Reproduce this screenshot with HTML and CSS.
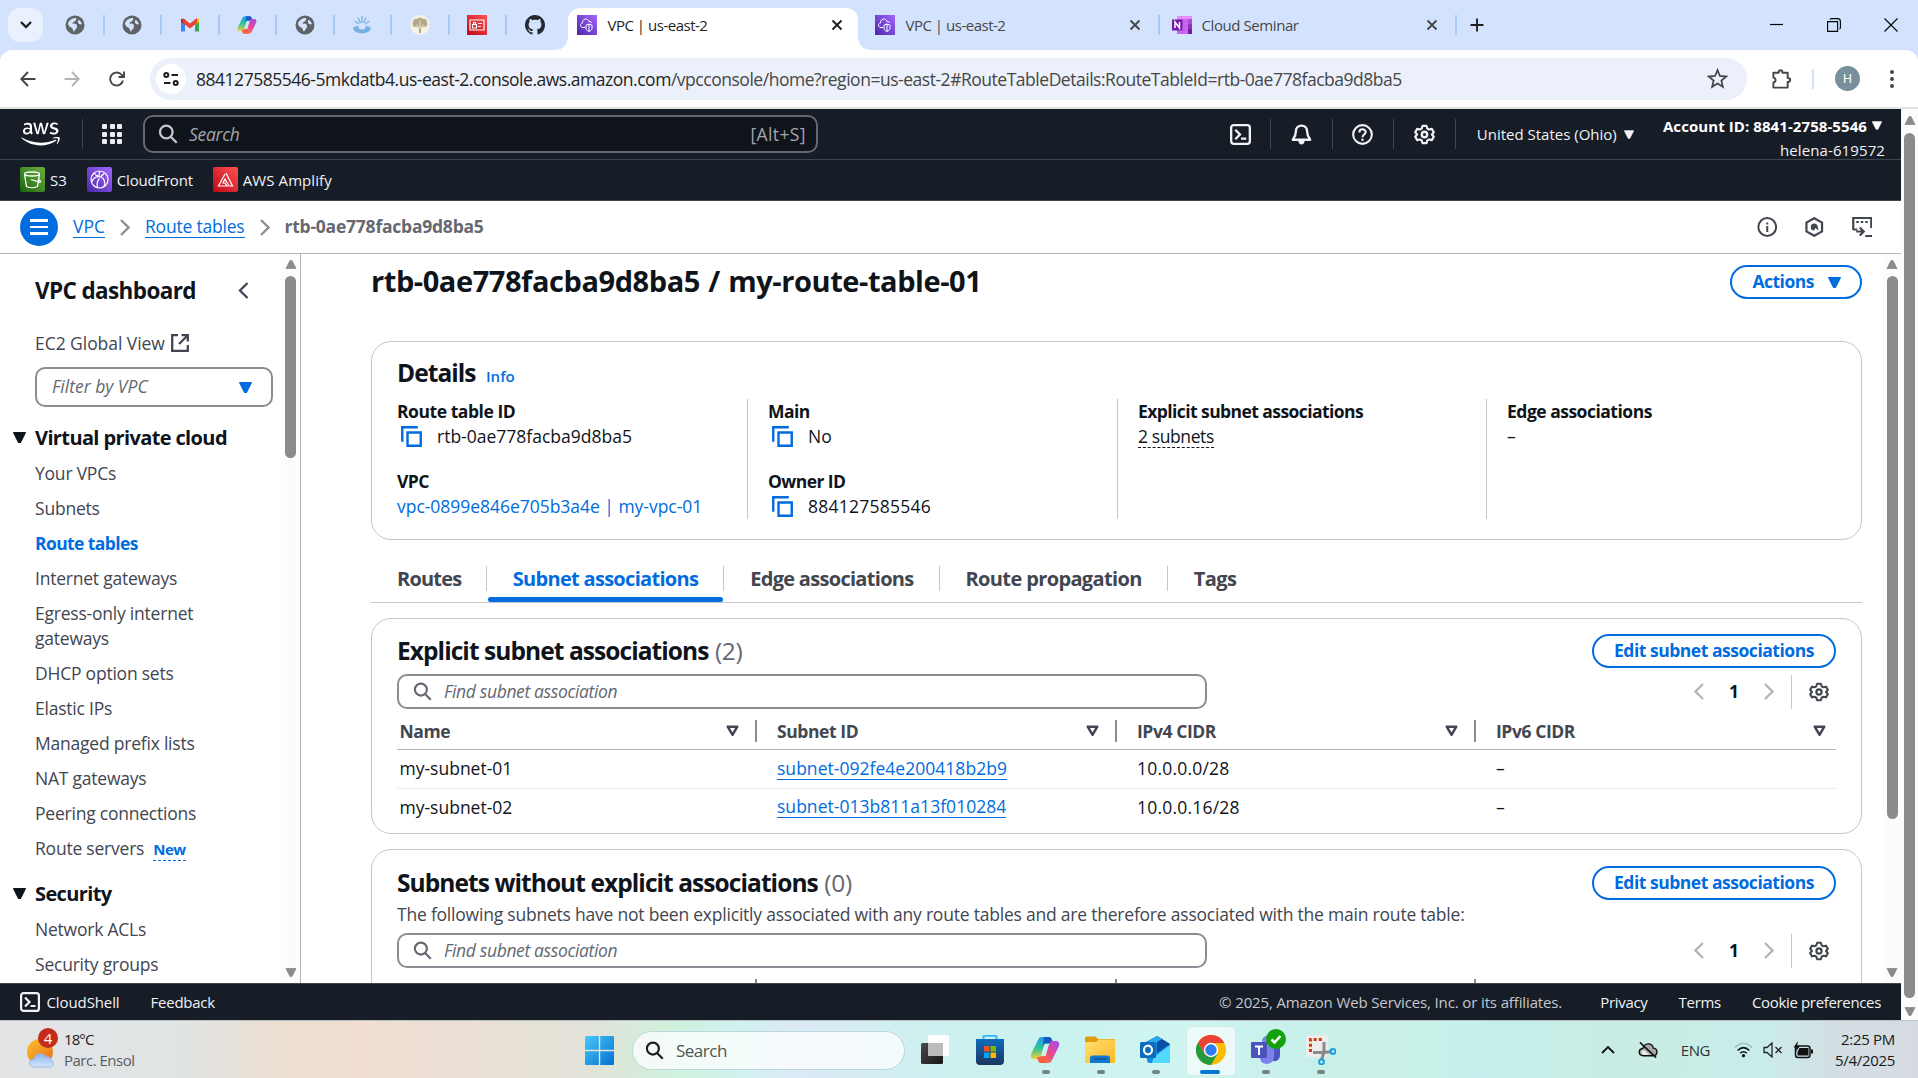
FILE: index.html
```html
<!DOCTYPE html>
<html lang="en">
<head>
<meta charset="utf-8">
<title>VPC | us-east-2</title>
<link rel="stylesheet" href="styles.css">
</head>
<body>
<svg class="defs" aria-hidden="true">
  <defs>
    <linearGradient id="purple" x1="0" y1="1" x2="1" y2="0"><stop offset="0" stop-color="#4d27a8"/><stop offset="1" stop-color="#a166ff"/></linearGradient>
    <linearGradient id="red" x1="0" y1="1" x2="1" y2="0"><stop offset="0" stop-color="#bd0816"/><stop offset="1" stop-color="#ff5252"/></linearGradient>
    <linearGradient id="green" x1="0" y1="1" x2="1" y2="0"><stop offset="0" stop-color="#1b660f"/><stop offset="1" stop-color="#6cae3e"/></linearGradient>
    <linearGradient id="cpA" x1="0" y1="0" x2="0" y2="1"><stop offset="0" stop-color="#1b9af0"/><stop offset=".5" stop-color="#2fc39a"/><stop offset="1" stop-color="#f5d13a"/></linearGradient>
    <linearGradient id="cpB" x1="1" y1="0" x2="0" y2="1"><stop offset="0" stop-color="#a24df5"/><stop offset=".5" stop-color="#e8488f"/><stop offset="1" stop-color="#ff8a3c"/></linearGradient>
    <linearGradient id="win" x1="0" y1="0" x2="1" y2="1"><stop offset="0" stop-color="#4cc8fa"/><stop offset="1" stop-color="#0070d2"/></linearGradient>
    <linearGradient id="sun" x1="0" y1="0" x2="1" y2="1"><stop offset="0" stop-color="#f5c52c"/><stop offset="1" stop-color="#ee6a1c"/></linearGradient>
    <linearGradient id="cloudg" x1="0" y1="0" x2="0" y2="1"><stop offset="0" stop-color="#8fb4f4"/><stop offset="1" stop-color="#d3e6fd"/></linearGradient>
    <linearGradient id="folder" x1="0" y1="0" x2="1" y2="1"><stop offset="0" stop-color="#ffdf77"/><stop offset="1" stop-color="#fbb91f"/></linearGradient>
    <linearGradient id="store" x1="0" y1="0" x2="0" y2="1"><stop offset="0" stop-color="#0f6cbd"/><stop offset="1" stop-color="#1d3560"/></linearGradient>
    <linearGradient id="dark" x1="0" y1="0" x2="1" y2="1"><stop offset="0" stop-color="#4a4a4a"/><stop offset="1" stop-color="#161616"/></linearGradient>
  </defs>
  <symbol id="globe" viewBox="0 0 20 20"><circle cx="10" cy="10" r="9.500" fill="#5f6368"/><path d="M3 8c2-4 5-5 8-5 1 2-1 3-2 4-1 0-2 1-1 2 2-1 4 0 4 2 0 3-2 3-3 6-1-1-1-3-2-4-2-1-4-2-4-5zM13 5c2 0 3 2 4 4-1 1-3 0-4-1z" fill="#d3e3fd"/></symbol>
  <symbol id="vpcfav" viewBox="0 0 20 20"><path fill="url(#purple)" d="M0 0h20v20H0z"/><path d="M8 12.500H6c-3 0-3.500-4-.5-4.500C5 3.500 11 2.500 12 6.500c1.500-.5 2.500.5 2.500 1.500" fill="none" stroke="#fff" stroke-width="1"/><path d="M12 9l3 1.200v3c0 1.500-1 2.500-3 3.300-2-.8-3-1.800-3-3.300v-3zM12 9v7" fill="none" stroke="#fff" stroke-width="1"/></symbol>
  <symbol id="copilot" viewBox="0 0 30 30"><path d="M8 5Q9 2 12 2h7q2.500 0 1.500 3l-1 4h-5l-4 13q-.8 2-3 2H4Q0 24 1 19z" fill="url(#cpA)"/><path d="M14 2h5q3 0 4 6h-7q-2 0-3 3z" fill="#1757c8"/><path d="M22 25q-1 3-4 3h-7q-2.500 0-1.500-3l1-4h5l4-13q.8-2 3-2H26q4 0 3 5z" fill="url(#cpB)"/><path d="M16 28h-5q-3 0-4-6h7q2 0 3-3z" fill="#f9603f"/></symbol>
  <symbol id="gear" viewBox="0 0 20 20"><g fill="none" stroke="currentColor" stroke-width="2.200" stroke-linejoin="round"><path d="M8 1.200h4l.8 2.700 1.900 1.100 2.700-.7 2 3.400L17.500 10l1.900 2.300-2 3.400-2.700-.7-1.900 1.100-.8 2.700H8l-.8-2.700L5.300 15l-2.700.7-2-3.400L2.500 10 .6 7.700l2-3.400 2.700.7 1.900-1.100z" transform="translate(.6 .6) scale(.94)"/><circle cx="10" cy="10" r="2.600"/></g></symbol>
  <symbol id="mag" viewBox="0 0 20 20"><g fill="none" stroke="currentColor" stroke-width="2.300"><circle cx="8.300" cy="8" r="6.300"/><path d="M12.700 12.700l6 6"/></g></symbol>
  <symbol id="copy" viewBox="0 0 20 20"><path d="M1.200 15V1.200H16M6.200 6.200h12.600v12.600H6.200z" fill="none" stroke="#006ce0" stroke-width="2.300"/></symbol>
  <symbol id="x" viewBox="0 0 12 12"><path d="M1.500 1.500l9 9m0-9l-9 9" fill="none" stroke="currentColor" stroke-width="1.900"/></symbol>
  <symbol id="shell" viewBox="0 0 20 20"><g fill="none" stroke="currentColor" stroke-width="2.200"><rect x="1.100" y="1.100" width="17.800" height="17.800" rx="2.500"/><path d="M5 5.500L9.500 10 5 14.500M10.500 14h5"/></g></symbol>
  <symbol id="left" viewBox="0 0 10 17"><path d="M9 1L1.500 8.500 9 16" fill="none" stroke="currentColor" stroke-width="2.300"/></symbol>
  <symbol id="right" viewBox="0 0 10 17"><path d="M1 1l7.500 7.500L1 16" fill="none" stroke="currentColor" stroke-width="2.300"/></symbol>
  <symbol id="tri" viewBox="0 0 12 10"><path d="M.5.500h11L7 9.500H5z" fill="currentColor" stroke="currentColor" stroke-linejoin="round"/></symbol>
  <symbol id="sort" viewBox="0 0 12 11"><path d="M1.600 1.500h8.800L6 9z" fill="none" stroke="#424650" stroke-width="2.300" stroke-linejoin="round"/></symbol>
</svg>

<div class="tabstrip">
  <button class="tabsearch"><svg width="12" height="8" viewBox="0 0 12 8"><path d="M1 1l5 5 5-5" fill="none" stroke="#1f1f1f" stroke-width="2.300"/></svg></button>
  <div class="pinned">
    <span class="pin"><svg><use href="#globe"/></svg></span>
    <span class="pin"><svg><use href="#globe"/></svg></span>
    <span class="pin"><svg viewBox="0 0 20 20"><path d="M1 4v12.500h4V4z" fill="#4285f4"/><path d="M15 4v12.500h4V4z" fill="#34a853"/><path d="M1 3.500L5 5v5L1 7z" fill="#c5221f"/><path d="M15 5l4-1.500V7l-4 3z" fill="#fbbc04"/><path d="M3 3l7 5.500L17 3v5l-7 5.500L3 8z" fill="#ea4335"/></svg></span>
    <span class="pin"><svg><use href="#copilot"/></svg></span>
    <span class="pin"><svg><use href="#globe"/></svg></span>
    <span class="pin"><svg viewBox="0 0 20 20"><path d="M1 13c1 7 17 7 18 0-2-2-5-2-6-2 2 2-1 3.500-3 3.500S5 13 7 11c-1 0-4 0-6 2z" fill="#74b1e2"/><path d="M10 1v7M6 2.500L8.500 8M14 2.500L11.500 8M2.500 6L7 9M17.500 6L13 9" stroke="#74b1e2" stroke-width="1.200"/></svg></span>
    <span class="pin"><svg viewBox="0 0 20 20"><circle cx="10" cy="10" r="10" fill="#f6f1e4"/><path d="M9 18v-5l-3-1.500c-3 1-4-2-3-4C3 5 5 3 7 4c2-2 4-2 6 0 2-1 4 1 4 3.500 1 2 0 5-3 4L11 13v5z" fill="#b3a88c"/><path d="M6 9.500L10 13l4-3.500M10 6v7" stroke="#f6f1e4" stroke-width=".8" fill="none"/></svg></span>
    <span class="pin"><svg viewBox="0 0 20 20"><path fill="url(#red)" d="M0 0h20v20H0z"/><g fill="none" stroke="#fff" stroke-width="1.200"><path d="M3 5h14v10H3zM11 8.500h4M11 11.500h3M5.500 9.500h4V13h-4zM6.500 9V7.500h2V9"/></g></svg></span>
    <span class="pin"><svg viewBox="0 0 16 16"><path fill="#24292f" d="M8 0C3.580 0 0 3.580 0 8c0 3.540 2.290 6.530 5.470 7.590.4.070.55-.17.55-.38 0-.19-.01-.82-.01-1.490-2.010.37-2.530-.49-2.690-.94-.09-.23-.48-.94-.82-1.130-.28-.15-.68-.52-.01-.53.63-.01 1.080.58 1.230.82.72 1.210 1.870.87 2.330.66.070-.52.28-.87.51-1.070-1.780-.2-3.640-.89-3.640-3.950 0-.87.31-1.590.82-2.150-.08-.2-.36-1.020.08-2.120 0 0 .67-.21 2.200.82.64-.18 1.320-.27 2-.27s1.360.09 2 .27c1.530-1.040 2.200-.82 2.200-.82.44 1.100.16 1.920.08 2.120.51.56.82 1.270.82 2.150 0 3.070-1.870 3.750-3.650 3.950.29.25.54.73.54 1.480 0 1.070-.01 1.930-.01 2.200 0 .21.15.46.55.38A8 8 0 0 0 16 8c0-4.420-3.580-8-8-8z"/></svg></span>
  </div>
  <div class="tab active"><svg class="fav"><use href="#vpcfav"/></svg><span class="tt">VPC | us-east-2</span><svg class="cls"><use href="#x"/></svg></div>
  <div class="tab second"><svg class="fav"><use href="#vpcfav"/></svg><span class="tt">VPC | us-east-2</span><svg class="cls"><use href="#x"/></svg></div>
  <div class="tab third"><svg class="fav" viewBox="0 0 20 20"><path fill="#ca64ea" d="M5 1h15v18H5z"/><path fill="#e48ff5" d="M5 1h15v3H5z"/><path fill="#ae4bd5" d="M16 4h4v5h-4z"/><path fill="#9332bf" d="M16 9h4v5h-4z"/><path fill="#7719aa" d="M16 14h4v5h-4zM0 4.500h10.500v11H0z"/><path d="M3 13V7l4.500 6V7" stroke="#fff" stroke-width="1.500" fill="none"/></svg><span class="tt">Cloud Seminar</span><svg class="cls"><use href="#x"/></svg></div>
  <svg class="plus" viewBox="0 0 14 14"><path d="M7 .5v13M.5 7h13" stroke="#1f1f1f" stroke-width="1.900"/></svg>
  <div class="winctl">
    <svg width="13" height="13" viewBox="0 0 13 13"><path d="M0 5.500h13" stroke="#000" stroke-width="1.200"/></svg>
    <svg width="14" height="14" viewBox="0 0 14 14"><path d="M.6 3.600h10v9.800h-10zM3 1.500q.5-.9 1.500-.9h6q2.900 0 2.900 2.900v6q0 1-.9 1.500" fill="none" stroke="#000" stroke-width="1.100"/></svg>
    <svg width="14" height="14" viewBox="0 0 14 14"><path d="M.5.500l13 13m0-13l-13 13" stroke="#000" stroke-width="1.100"/></svg>
  </div>
</div>

<div class="toolbar">
  <svg class="nav back" viewBox="0 0 16 16"><path d="M15.500 8H1.500M8 1L1.300 8 8 15" fill="none" stroke="#474747" stroke-width="2"/></svg>
  <svg class="nav fwd" viewBox="0 0 16 16"><path d="M.5 8h14M8 1l6.700 7L8 15" fill="none" stroke="#b5b5b5" stroke-width="2"/></svg>
  <svg class="nav reload" viewBox="0 0 16 16"><path d="M14 9.500A6.500 6.500 0 1 1 12.800 4L15 6M15 .5V6H9.500" fill="none" stroke="#474747" stroke-width="1.900"/></svg>
  <div class="omnibox">
    <span class="site"><svg width="16" height="14" viewBox="0 0 16 14"><g fill="none" stroke="#1f1f1f" stroke-width="2"><circle cx="3.300" cy="3" r="2"/><path d="M8.500 3H15M1 11h6.500"/><circle cx="12.700" cy="11" r="2"/></g></svg></span>
    <span class="url">884127585546-5mkdatb4.us-east-2.console.aws.amazon.com<i>/vpcconsole/home?region=us-east-2#RouteTableDetails:RouteTableId=rtb-0ae778facba9d8ba5</i></span>
    <svg class="star" viewBox="0 0 20 20"><path d="M10 2l2.300 5.600 6 .5-4.600 3.900 1.400 5.900-5.100-3.200-5.100 3.200L6.300 12 1.700 8.100l6-.5z" fill="none" stroke="#474747" stroke-width="1.700"/></svg>
  </div>
  <svg class="puzzle" viewBox="0 0 22 22"><path d="M2.500 4.500H8c0-3.500 4-3.500 4 0h5.500V10c3.500 0 3.500 4 0 4v6h-15v-5.500c3-.5 3-4.500 0-5z" fill="none" stroke="#474747" stroke-width="2" stroke-linejoin="round"/></svg>
  <span class="tsep"></span>
  <span class="avatar">H</span>
  <span class="kebab"><b></b><b></b><b></b></span>
</div>

<div class="page">
  <div class="console">
    <header class="aws-top">
      <svg class="logo" viewBox="0 0 304 182"><path fill="#fff" d="M86 66c0 4 0 7 1 9 1 2 2 5 4 8 0 1 1 2 1 2 0 1-1 2-2 3l-6 4c-1 1-2 1-3 1-1 0-2 0-3-1-1-2-3-3-4-5-1-2-2-4-3-6-8 9-17 14-29 14-8 0-15-2-20-7-5-5-7-11-7-19 0-8 3-15 9-20 6-5 14-8 24-8 3 0 7 0 10 1 4 1 7 1 11 2v-7c0-7-1-12-4-15-3-3-8-4-15-4-3 0-7 0-10 1-4 1-7 2-10 3l-3 1h-2c-1 0-2-1-2-3v-5c0-1 0-2 1-3 0-1 1-1 3-2 3-2 7-3 11-4 5-1 10-2 15-2 11 0 20 3 25 8 5 5 8 13 8 24v30zM45 82c3 0 6-1 10-2 3-1 6-3 9-6 2-2 3-4 3-7 1-2 1-6 1-9v-4c-3-1-6-1-9-2-3 0-6 0-9 0-6 0-11 1-14 4-3 3-5 6-5 11 0 5 1 8 4 11 2 2 6 4 10 4zM126 92c-2 0-3 0-4-1-1-1-2-2-2-4L96 10c-1-2-1-3-1-4 0-2 1-2 2-2h10c2 0 3 0 4 1 1 1 1 2 2 4l17 66 15-66c1-2 1-3 2-4 1-1 2-1 4-1h8c2 0 3 0 4 1 1 1 2 2 2 4l16 67 17-67c1-2 1-3 2-4 1-1 2-1 4-1h9c2 0 2 1 2 2v2l-25 79c-1 2-1 3-2 4-1 1-2 1-4 1h-9c-2 0-3 0-4-1-1-1-2-2-2-4L154 23l-15 64c0 2-1 3-2 4-1 1-2 1-4 1zM256 95c-5 0-11-1-16-2-5-1-9-3-12-4-2-1-3-2-3-3v-8c0-2 1-3 2-3h2l3 1c3 2 7 3 11 4 4 1 8 1 12 1 6 0 11-1 14-3 3-2 5-5 5-9 0-3-1-5-3-7-2-2-5-3-10-5l-14-5c-7-2-13-6-16-10-3-4-5-9-5-14 0-4 1-8 3-11 2-3 4-6 7-8 3-2 6-4 10-5 4-1 8-2 13-2 2 0 5 0 7 0l7 1 6 2 4 2 3 2c1 1 1 2 1 3v5c0 2-1 3-2 3-1 0-2 0-4-1-6-3-12-4-19-4-6 0-10 1-13 3-3 2-5 5-5 8 0 3 1 5 3 7 2 2 6 4 11 6l14 4c7 2 12 5 15 9 3 4 5 9 5 14 0 4-1 8-3 11-2 4-4 7-7 9-3 3-7 4-11 6-5 1-9 2-14 2zM274 143c-33 24-81 37-122 37-58 0-110-21-149-57-3-3 0-7 3-4 43 25 95 40 149 40 37 0 77-8 114-23 5-3 10 3 5 7zM287 128c-4-5-28-3-38-1-3 0-4-2-1-4 19-13 50-9 53-5 4 4-1 36-18 50-3 2-5 1-4-2 4-9 12-31 8-38z"/></svg>
      <span class="vsep"></span>
      <span class="apps"><b></b><b></b><b></b><b></b><b></b><b></b><b></b><b></b><b></b></span>
      <div class="gsearch"><svg><use href="#mag"/></svg><em>Search</em><span>[Alt+S]</span></div>
      <div class="tools">
        <span><svg><use href="#shell"/></svg></span>
        <span><svg viewBox="0 0 20 20"><path d="M10 1.500c-3.500 0-5.300 2.500-5.300 5.500 0 4-1 5.500-3 8h16.600c-2-2.500-3-4-3-8 0-3-1.800-5.500-5.300-5.500z" fill="none" stroke="currentColor" stroke-width="2.200" stroke-linejoin="round"/><path d="M7 15.500c0 5.500 6 5.500 6 0z" fill="currentColor"/></svg></span>
        <span><svg viewBox="0 0 20 20"><g fill="none" stroke="currentColor" stroke-width="2"><circle cx="10" cy="10" r="8.900"/><path d="M7 8c0-4 6-3.800 6-.3C13 10 10 10 10 12.500"/></g><circle cx="10" cy="15" r="1.200" fill="currentColor"/></svg></span>
        <span><svg><use href="#gear"/></svg></span>
      </div>
      <div class="region">United States (Ohio) <svg><use href="#tri"/></svg></div>
      <div class="account"><div><b>Account ID: 8841-2758-5546</b><svg><use href="#tri"/></svg></div><div class="user">helena-619572</div></div>
    </header>
    <div class="favs">
      <a><svg viewBox="0 0 25 25"><rect width="25" height="25" rx="2" fill="url(#green)"/><g fill="none" stroke="#fff" stroke-width="1.300"><ellipse cx="12" cy="7" rx="7.500" ry="2"/><path d="M4.500 7l2 12.500c3 1.500 8 1.500 11 0l2-12.500M11 12.500l8.500 2.500c2 .3 1-1.500-1-2.500"/></g></svg>S3</a>
      <a class="cf"><svg viewBox="0 0 25 25"><rect width="25" height="25" rx="2" fill="url(#purple)"/><g fill="none" stroke="#fff" stroke-width="1.200"><circle cx="12.500" cy="12.500" r="8.500"/><path d="M7 6c2 3 3 3 5.500 3.500M5 15c1-5 6-6 9-5s5 6 3 9M13 4.500c-1 1-1 4-1 5M12.500 11.500c-2 2-3 5-2 9M17 6.500l-3 3"/></g></svg>CloudFront</a>
      <a class="am"><svg viewBox="0 0 25 25"><rect width="25" height="25" rx="2" fill="url(#red)"/><g fill="none" stroke="#fff" stroke-width="1.200"><path d="M12 7L5.500 19H14l-2-3h-2l2-4 4 7h3.500L13 6"/></g></svg>AWS Amplify</a>
    </div>
    <div class="crumbs">
      <span class="burger"><b></b><b></b><b></b></span>
      <a>VPC</a><svg class="ch"><use href="#right"/></svg><a class="rt">Route tables</a><svg class="ch"><use href="#right"/></svg><strong>rtb-0ae778facba9d8ba5</strong>
      <div class="cicons">
        <svg viewBox="0 0 20 20"><circle cx="10" cy="10" r="8.900" fill="none" stroke="#424650" stroke-width="2"/><path d="M9 5.500h2v2H9zM9 9h2v6H9z" fill="#424650"/></svg>
        <svg viewBox="0 0 20 20"><path d="M10 1.200l7.800 4.400v8.800L10 18.800l-7.800-4.400V5.600z" fill="none" stroke="#424650" stroke-width="2.200"/><path d="M10 6.500a3.500 3.500 0 1 0 0 7l1-2.500 3.500 2.500-1-3A3.500 3.500 0 0 0 10 6.500z" fill="#424650"/></svg>
        <svg viewBox="0 0 20 20"><path d="M1 13V1h18v10M1 12.500h4M13 19h7M4 14.500h7M7.500 10.500l4 4-4 4" fill="none" stroke="#424650" stroke-width="2.200"/><path d="M4 4h2.500v2H4zM8.500 4H11v2H8.500zM13 4h2.500v2H13z" fill="#424650"/></svg>
      </div>
    </div>
    <div class="body">
      <nav class="side">
        <div class="nav-list">
          <div class="dash"><h2>VPC dashboard</h2><svg><use href="#left"/></svg></div>
          <div class="ec2">EC2 Global View <svg viewBox="0 0 18 18"><path d="M7 1.200H1.200v15.600h15.600V11M10.500 1.200h6.300v6.300M16.800 1.200L8 10" fill="none" stroke="#424650" stroke-width="2.300"/></svg></div>
          <div class="filter"><em>Filter by VPC</em><svg><use href="#tri"/></svg></div>
          <h3 class="vpcg"><svg><use href="#tri"/></svg>Virtual private cloud</h3>
          <ul>
            <li>Your VPCs</li><li>Subnets</li><li class="on">Route tables</li><li>Internet gateways</li><li>Egress-only internet<br>gateways</li><li>DHCP option sets</li><li>Elastic IPs</li><li>Managed prefix lists</li><li>NAT gateways</li><li>Peering connections</li><li>Route servers<span class="new">New</span></li>
          </ul>
          <h3 class="secg"><svg><use href="#tri"/></svg>Security</h3>
          <ul><li>Network ACLs</li><li>Security groups</li></ul>
        </div>
        <div class="sb side-sb"><svg class="up"><use href="#tri"/></svg><span class="thumb"></span><svg class="down"><use href="#tri"/></svg></div>
      </nav>
      <main>
        <div class="titlebar"><h1>rtb-0ae778facba9d8ba5 / my-route-table-01</h1><button class="pill actions">Actions <svg><use href="#tri"/></svg></button></div>
        <section class="card details">
          <div class="dh"><h2>Details</h2><a>Info</a></div>
          <div class="cols">
            <div><dl><dt class="w1">Route table ID</dt><dd class="cp"><svg><use href="#copy"/></svg>rtb-0ae778facba9d8ba5</dd><dt>VPC</dt><dd class="lnk">vpc-0899e846e705b3a4e | my-vpc-01</dd></dl></div>
            <div><dl><dt>Main</dt><dd class="cp"><svg><use href="#copy"/></svg>No</dd><dt>Owner ID</dt><dd class="cp num"><svg><use href="#copy"/></svg>884127585546</dd></dl></div>
            <div><dl><dt>Explicit subnet associations</dt><dd><span class="dash-u">2 subnets</span></dd></dl></div>
            <div><dl><dt class="w2">Edge associations</dt><dd>–</dd></dl></div>
          </div>
        </section>
        <div class="tabs"><span>Routes</span><span class="on">Subnet associations</span><span>Edge associations</span><span>Route propagation</span><span>Tags</span></div>
        <section class="card explicit">
          <div class="ch2"><h2>Explicit subnet associations <i>(2)</i></h2><button class="pill">Edit subnet associations</button></div>
          <div class="finder">
            <div class="find"><svg><use href="#mag"/></svg><em>Find subnet association</em></div>
            <div class="pager"><svg class="ar"><use href="#left"/></svg><b>1</b><svg class="ar"><use href="#right"/></svg><span class="psep"></span><svg class="gr"><use href="#gear"/></svg></div>
          </div>
          <div class="table">
            <div class="tr th"><span>Name<svg><use href="#sort"/></svg></span><span>Subnet ID<svg><use href="#sort"/></svg></span><span>IPv4 CIDR<svg><use href="#sort"/></svg></span><span>IPv6 CIDR<svg><use href="#sort"/></svg></span></div>
            <div class="tr"><span>my-subnet-01</span><span><a>subnet-092fe4e200418b2b9</a></span><span class="ip">10.0.0.0/28</span><span>–</span></div>
            <div class="tr"><span>my-subnet-02</span><span><a>subnet-013b811a13f010284</a></span><span class="ip">10.0.0.16/28</span><span>–</span></div>
          </div>
        </section>
        <section class="card without">
          <div class="ch2"><h2>Subnets without explicit associations <i>(0)</i></h2><button class="pill">Edit subnet associations</button></div>
          <p>The following subnets have not been explicitly associated with any route tables and are therefore associated with the main route table:</p>
          <div class="finder">
            <div class="find"><svg><use href="#mag"/></svg><em>Find subnet association</em></div>
            <div class="pager"><svg class="ar"><use href="#left"/></svg><b>1</b><svg class="ar"><use href="#right"/></svg><span class="psep"></span><svg class="gr"><use href="#gear"/></svg></div>
          </div>
          <div class="table cut"><div class="tr th"><span></span><span></span><span></span><span></span></div></div>
        </section>
      </main>
      <div class="sb main-sb"><svg class="up"><use href="#tri"/></svg><span class="thumb"></span><svg class="down"><use href="#tri"/></svg></div>
    </div>
    <footer><svg><use href="#shell"/></svg><span class="f1">CloudShell</span><span class="f2">Feedback</span><span class="copy">© 2025, Amazon Web Services, Inc. or its affiliates.</span><span class="f3">Privacy</span><span class="f4">Terms</span><span class="f5">Cookie preferences</span></footer>
  </div>
  <div class="sb page-sb"><svg class="up"><use href="#tri"/></svg><span class="thumb"></span><svg class="down"><use href="#tri"/></svg></div>
</div>

<div class="taskbar">
  <div class="weather">
    <svg width="34" height="40" viewBox="0 0 34 40"><circle cx="15" cy="22" r="13" fill="url(#sun)"/><path d="M8 37c-6 0-6-8 0-8 1-6 10-7 12-2 5-1 6 3 5 4 4 1 3 6-1 6z" fill="url(#cloudg)" stroke="#8fb0ea" stroke-width=".8" transform="translate(1)"/></svg>
    <span class="badge">4</span>
    <div><div class="temp">18°C</div><div class="city">Parc. Ensol</div></div>
  </div>
  <svg class="start" viewBox="0 0 29 29"><path fill="url(#win)" d="M0 1q0-1 1-1h12.800v13.800H0zM15.200 0H28q1 0 1 1v12.800H15.200zM0 15.200h13.800V29H1q-1 0-1-1zM15.200 15.200H29V28q0 1-1 1H15.200z"/></svg>
  <div class="wsearch"><svg><use href="#mag"/></svg>Search</div>
  <div class="apps-row">
    <span><svg viewBox="0 0 30 30"><rect x="1" y="8" width="22" height="21" rx="1.500" fill="url(#dark)"/><rect x="8" y="0" width="21" height="21" rx="1.500" fill="#fff" opacity=".9"/><path d="M8 8h15v13H8z" fill="#bcbcbc"/></svg></span>
    <span><svg viewBox="0 0 30 30"><path d="M8.500 6V2q0-1.200 1.200-1.200h10.600q1.200 0 1.200 1.200v4" fill="none" stroke="#2fb9f5" stroke-width="2"/><path d="M1 4h28v22q0 4-4 4H5q-4 0-4-4z" fill="url(#store)"/><path fill="#f25022" d="M9 11h5.500v5.500H9z"/><path fill="#7fba00" d="M15.500 11H21v5.500h-5.500z"/><path fill="#00a4ef" d="M9 17.500h5.500V23H9z"/><path fill="#ffb900" d="M15.500 17.500H21V23h-5.500z"/></svg></span>
    <span class="dot"><svg><use href="#copilot"/></svg></span>
    <span class="dot"><svg viewBox="0 0 30 30"><path d="M0 3q0-1.500 1.500-1.500h9L13 4h17v5H0z" fill="#df9c05"/><path d="M0 7h11l3-2.500h15q1 0 1 1V27q0 1-1 1H1q-1 0-1-1z" fill="url(#folder)"/><path d="M5 28v-5q0-2.500 2.500-2.500h15q2.500 0 2.500 2.500v5z" fill="#1277cf"/><path d="M9 24h12" stroke="#0a4f94" stroke-width="1.300"/></svg></span>
    <span class="dot"><svg viewBox="0 0 30 30"><path d="M4 8L17 1l13 8v16q0 3-3 3H10q-3 0-3-3z" fill="#1490df"/><path d="M14 22L30 10v15q0 3-3 3H12z" fill="#50d9ff"/><path d="M17 1l13 8-13 9z" fill="#0a4da2"/><path d="M4 8L17 1l5 3L9 12z" fill="#28a8ea"/><rect y="7" width="16" height="16" rx="1.500" fill="#0f6cbd"/><ellipse cx="8" cy="15" rx="4" ry="4.300" fill="none" stroke="#fff" stroke-width="2.200"/></svg></span>
    <span class="cur"><svg viewBox="0 0 30 30"><circle cx="15" cy="15" r="15" fill="#fbbc05"/><path d="M15 15L8.500 18.500 2 7.500A15 15 0 0 0 15 30l6.500-11z" fill="#249a41"/><path d="M28.300 8H15l-6.500 10.500L2 7.500A15 15 0 0 1 28.300 8z" fill="#ea4335"/><circle cx="15" cy="15" r="7.200" fill="#fff"/><circle cx="15" cy="15" r="5.700" fill="#2f7bf0"/></svg></span>
    <span class="dot teams"><svg viewBox="0 0 30 30"><circle cx="16" cy="6" r="5" fill="#7b83eb"/><path d="M20 12h9v9q-1 6-7 5z" fill="#4f55c0"/><path d="M9 11h14v11q-1 7-8 7-6-1-6-6z" fill="#7b83eb"/><rect y="7" width="16" height="16" rx="1" fill="#4b53bc"/><path d="M4 11.500h8M8 11.500V20" stroke="#fff" stroke-width="2"/></svg><i><svg viewBox="0 0 20 20"><path d="M5.500 10.500l3 3 6-6.500" fill="none" stroke="#fff" stroke-width="2.500"/></svg></i></span>
    <span class="dot"><svg viewBox="0 0 30 30"><rect width="22" height="22" rx="2" fill="#ececec"/><path d="M4.500 17V4.500H17" fill="none" stroke="#d83b01" stroke-width="3" stroke-dasharray="3 2.200"/><path d="M18 7v10.500H7M18 17l-2.500 8M18 17.500l8-1" fill="none" stroke="#8a8a8a" stroke-width="3"/><g fill="none" stroke="#1a9fe0" stroke-width="2"><circle cx="27" cy="16.500" r="2.400"/><circle cx="15.500" cy="27" r="2.400"/></g></svg></span>
  </div>
  <div class="tray">
    <svg class="t1" viewBox="0 0 14 9"><path d="M1 8l6-6 6 6" fill="none" stroke="#111" stroke-width="1.800"/></svg>
    <svg class="t2" viewBox="0 0 22 18"><path d="M5.500 15C0 15 0 8 5 7.500 6.500 1 15 1 16 7c5 0 5 8 .5 8z" fill="#aaa" stroke="#111" stroke-width="1.500"/><path d="M6 14c-3 0-3-5 0-5l6 5z" fill="#eee"/><path d="M2 1l17 16" stroke="#111" stroke-width="1.600"/></svg>
    <span class="lang">ENG</span>
    <svg class="t3" viewBox="0 0 20 16"><g fill="none" stroke="#111" stroke-width="1.500"><path d="M1 5.500q9-9 18 0" stroke="#9fbab8"/><path d="M3.800 8.500q6.200-6 12.400 0M6.500 11.500q3.500-3.300 7 0"/></g><circle cx="10" cy="14" r="1.700" fill="#111"/></svg>
    <svg class="t4" viewBox="0 0 20 16"><path d="M1 5.500h3L9 1v14l-5-4.500H1zM12.500 5l6 6m0-6l-6 6" fill="none" stroke="#222" stroke-width="1.300"/></svg>
    <svg class="t5" viewBox="0 0 20 18"><rect x="2" y="5" width="14.500" height="11.500" rx="2.500" fill="none" stroke="#111" stroke-width="1.500"/><path d="M6 7h9v7.500H4V11z" fill="#111"/><path d="M17.500 8.500h2v4h-2z" fill="#111"/><path d="M4.500 0L0 6.500h3L2 11l4.500-6h-3z" fill="#111"/></svg>
    <div class="clock"><div>2:25 PM</div><div>5/4/2025</div></div>
  </div>
</div>
</body>
</html>
```
FILE: styles.css
```css
* { box-sizing: border-box; }
html, body { margin: 0; height: 100%; overflow: hidden; }
body { display: flex; flex-direction: column; width: 1918px; height: 1078px; font-family: "Open Sans", "Noto Sans", sans-serif; font-size: 17.5px; color: #0f141a; background: #fff; white-space: nowrap; }
svg { display: block; flex: none; }
.defs { position: absolute; width: 0; height: 0; }
h1, h2, h3, p, ul, dl, dd { margin: 0; padding: 0; }
button { font: inherit; border: 0; padding: 0; }

/* browser tabs */
.tabstrip { flex: none; display: flex; align-items: center; height: 50px; background: #d3e3fd; }
.tabsearch { display: flex; align-items: center; justify-content: center; width: 35px; height: 34px; margin-left: 8px; border-radius: 12px; background: #eaf1fe; }
.pinned { display: flex; margin-left: 4px; }
.pin { display: flex; align-items: center; justify-content: center; width: 57.5px; height: 20px; border-right: 2px solid #a8c7fa; }
.pin:last-child { border-right: 0; padding-right: 2px; }
.pin svg { width: 20px; height: 20px; }
.tab { display: flex; align-items: center; font-size: 15px; letter-spacing: -.49px; color: #474747; }
.fav { width: 20px; height: 20px; }
.tt { margin-left: 11px; line-height: 20px; }
.cls { width: 12px; height: 12px; margin-left: auto; }
.active { position: relative; align-self: flex-end; width: 290px; height: 42px; margin-left: 3px; padding: 0 15px 8px 9px; border-radius: 12px 12px 0 0; background: #fff; color: #1f1f1f; }
.active::before, .active::after { content: ""; position: absolute; bottom: 0; width: 12px; height: 12px; }
.active::before { left: -12px; background: radial-gradient(circle at 0 0, transparent 11.5px, #fff 12px); }
.active::after { right: -12px; background: radial-gradient(circle at 100% 0, transparent 11.500px, #fff 12px); }
.second { width: 302px; height: 20px; padding: 0 17px 0 17px; border-right: 2px solid #a8c7fa; }
.third { width: 297px; height: 20px; padding: 0 17px 0 12px; border-right: 2px solid #a8c7fa; letter-spacing: -.42px; }
.third .tt { margin-left: 10px; }
.plus { width: 14px; height: 14px; margin-left: 13px; }
.winctl { display: flex; align-items: center; gap: 43.500px; margin: 0 20px 0 auto; }

/* address bar */
.toolbar { flex: none; display: flex; align-items: center; height: 59px; border-bottom: 2px solid #dfe6e0; background: #fff; border-radius: 12px 12px 0 0; box-shadow: 0 -12px 0 #d3e3fd; clip-path: inset(0); }
.nav { width: 16px; height: 16px; }
.back { margin-left: 20px; }
.fwd { margin-left: 28px; }
.reload { margin-left: 29px; }
.omnibox { display: flex; align-items: center; width: 1597px; height: 42px; margin-left: 25px; border-radius: 21px; background: #ebf0fa; }
.site { display: flex; align-items: center; justify-content: center; width: 30px; height: 30px; margin-left: 6px; border-radius: 50%; background: #fff; }
.url { margin-left: 10px; letter-spacing: -.475px; color: #1f1f1f; }
.url i { font-style: normal; color: #474747; }
.star { width: 21px; height: 21px; margin: 0 19px 0 auto; }
.puzzle { width: 21px; height: 22px; margin-left: 24px; }
.tsep { width: 2px; height: 20px; margin-left: 20px; background: #d3e3fd; }
.avatar { width: 25px; height: 25px; margin-left: 21px; border-radius: 50%; background: #78909c; color: #fff; font: 12.5px/25px Roboto, sans-serif; text-align: center; }
.kebab { display: flex; flex-direction: column; gap: 3px; margin-left: 30px; }
.kebab b { width: 4px; height: 4px; border-radius: 50%; background: #474747; }

/* page frame */
.page { display: flex; height: 911px; }
.console { display: flex; flex-direction: column; width: 1901px; }
.sb { display: flex; flex-direction: column; align-items: center; flex: none; background: #fcfcfc; color: #8b8b8b; }
.sb svg { width: 12px; height: 9px; }
.up { transform: rotate(180deg); }
.thumb { border-radius: 6px; background: #8b8b8b; }
.page-sb { width: 17px; padding-top: 7px; }
.page-sb .thumb { width: 11px; height: 865px; margin: 8px 0 9px; }

/* console header */
.aws-top { flex: none; display: flex; align-items: center; height: 51px; background: #161d26; border-bottom: 1px solid #424650; color: #f2f2f5; font-size: 15px; font-weight: 500; }
.logo { width: 39px; height: 24px; margin-left: 21px; }
.vsep { width: 1px; height: 30px; margin-left: 22px; background: #424650; }
.apps { display: grid; grid-template-columns: repeat(3, 5px); gap: 2.500px; margin-left: 19px; }
.apps b { height: 5px; border-radius: 1px; background: #ebebf0; }
.gsearch { display: flex; align-items: center; width: 675px; height: 38px; margin-left: 21px; padding: 0 10px 0 13px; border: 2px solid #656871; border-radius: 10px; background: #0f141a; font-size: 17.5px; font-weight: 400; color: #a4a4ad; }
.gsearch svg { width: 20px; height: 20px; color: #c6c6cd; }
.gsearch em { margin-left: 11px; padding-bottom: 1px; letter-spacing: -.3px; }
.gsearch span { margin-left: auto; padding-bottom: 1px; letter-spacing: .4px; }
.tools { display: flex; margin-left: 398px; padding-left: 14px; }
.tools span { display: flex; align-items: center; justify-content: center; width: 61.600px; height: 30px; margin-left: 0; border-right: 1px solid #424650; }
.tools span:first-child { width: 41px; padding-right: 20px; }
.tools svg { width: 21px; height: 21px; }
.region { display: flex; align-items: center; margin-left: 21px; }
.region svg, .account svg { width: 10px; height: 9px; margin-left: 7px; }
.account { margin: 7px 16px 0 auto; line-height: 24px; text-align: right; }
.account > div:first-child { display: flex; align-items: center; margin-right: 3px; letter-spacing: .08px; color: #fff; }
.account > div:first-child svg { margin-left: 5px; }
.user { letter-spacing: .1px; }
.favs { flex: none; display: flex; align-items: center; height: 41px; padding: 0 0 1px 20px; background: #161d26; border-bottom: 1px solid #424650; color: #f2f2f5; font-size: 15px; font-weight: 500; }
.favs a { display: flex; align-items: center; gap: 5px; margin-right: 20px; }
.favs svg { width: 25px; height: 25px; }
.cf { letter-spacing: -.21px; }
.am { letter-spacing: .08px; }

.crumbs { flex: none; display: flex; align-items: center; height: 53px; padding-left: 20px; border-bottom: 1px solid #b4b4bb; }
.burger { display: flex; flex-direction: column; align-items: center; justify-content: center; gap: 4px; width: 38px; height: 38px; margin-right: 15px; border-radius: 50%; background: #006ce0; }
.burger b { width: 18px; height: 2.500px; background: #fff; }
.crumbs a { height: 22px; margin-top: -1px; line-height: 20px; border-bottom: 1px solid #006ce0; color: #006ce0; }
.crumbs .rt { letter-spacing: -.2px; }
.crumbs strong { margin-top: -3px; color: #656871; letter-spacing: -.23px; }
.ch { width: 10px; height: 17px; margin: 0 15px; color: #8c8c94; }
.cicons { display: flex; gap: 27px; margin: 0 29px 0 auto; }
.cicons svg { width: 20.500px; height: 20px; }

/* side navigation */
.body { display: flex; height: 729px; }
.side { display: flex; width: 301px; border-right: 1px solid #b4b4bb; overflow: hidden; }
.nav-list { width: 281px; padding-left: 35px; color: #424650; }
.dash { display: flex; align-items: center; height: 28px; margin-top: 22px; color: #0f141a; }
.dash h2 { width: 203px; font-size: 22.500px; letter-spacing: -.62px; }
.dash svg { width: 11px; height: 17px; color: #424650; }
.ec2 { display: flex; align-items: center; gap: 6px; height: 24px; margin-top: 27px; letter-spacing: -.05px; }
.ec2 svg { width: 18px; height: 18px; }
.filter { display: flex; align-items: center; width: 238px; height: 40px; margin-top: 12px; padding: 0 19px 0 15px; border: 2px solid #8c8c94; border-radius: 10px; color: #656871; }
.filter em { padding-bottom: 3px; letter-spacing: 0; }
.filter svg { width: 13px; height: 11px; margin-left: auto; color: #006ce0; }
.side h3 { display: flex; align-items: center; height: 28px; margin-left: -22px; font-size: 20px; letter-spacing: -.62px; color: #0f141a; }
.side h3 svg { width: 13px; height: 11px; margin-right: 9px; }
.vpcg { margin-top: 16px; }
.secg { margin-top: 18px; }
.side ul { list-style: none; }
.vpcg + ul, .secg + ul { margin-top: 10px; }
.side li { line-height: 25px; margin-bottom: 10px; letter-spacing: -.22px; }
.side li.on { color: #006ce0; font-weight: 700; letter-spacing: -.6px; }
.new { display: inline-block; margin-left: 9px; border-bottom: 1px dashed #006ce0; color: #006ce0; font-size: 15px; font-weight: 700; line-height: 21px; letter-spacing: -.5px; }
.side-sb { width: 19px; padding-top: 6px; }
.side-sb .thumb { width: 11px; height: 182px; margin-top: 7px; }
.side-sb .down { margin-top: 510px; }

/* main column */
main { width: 1582px; height: 729px; padding-left: 70px; overflow: hidden; }
.titlebar { display: flex; align-items: flex-start; justify-content: space-between; width: 1491px; height: 34px; margin-top: 11px; }
h1 { font-size: 29px; line-height: 32px; letter-spacing: -.43px; word-spacing: 1.300px; }
.pill { display: flex; align-items: center; justify-content: center; height: 34px; padding: 0 20px 2px; border: 2px solid #006ce0; border-radius: 20px; background: #fff; color: #006ce0; font-weight: 700; letter-spacing: -.47px; }
.actions { gap: 14px; padding: 0 19px 2px 20px; letter-spacing: -.5px; }
.actions svg { width: 13px; height: 11px; margin-top: 2px; }
.card { width: 1491px; padding: 0 25px; border: 1px solid #c6c6cd; border-radius: 20px; }
.details { height: 199px; margin-top: 42px; padding-top: 16px; }
.card h2 { font-size: 24.500px; letter-spacing: -.93px; }
.dh { display: flex; align-items: baseline; height: 30px; line-height: 30px; }
.card .dh h2 { letter-spacing: -.95px; }
.dh a { margin-left: 10.500px; color: #006ce0; font-size: 15px; font-weight: 600; }
.cols { display: flex; height: 120px; margin-top: 11px; }
.cols > div { flex: none; width: 370px; padding-left: 20px; border-left: 1px solid #c6c6cd; line-height: 22px; }
.cols > div:first-child { width: 350px; padding-left: 0; border-left: 0; }
.cols > div:nth-child(3) { width: 369px; }
.cols > div:last-child { width: 300px; }
.cols dl { margin-top: -.5px; }
dt { margin-top: 1px; font-weight: 700; letter-spacing: -.57px; }
dd { height: 22px; margin-top: 3px; }
dd + dt { margin-top: 23px; }
.w1 { letter-spacing: -.45px; }
.w2 { letter-spacing: -.5px; }
.cp { display: flex; align-items: center; }
.num { letter-spacing: .25px; }
.cp svg { width: 21px; height: 21px; margin: 2px 15px 0 4px; }
.lnk { color: #006ce0; letter-spacing: -.03px; }
.dash-u { display: inline-block; height: 23px; border-bottom: 1px dashed #0f141a; letter-spacing: -.4px; }

.tabs { display: flex; align-items: flex-start; width: 1491px; height: 49px; margin-top: 14px; padding-top: 12px; border-bottom: 1px solid #c6c6cd; color: #424650; font-size: 20px; font-weight: 700; letter-spacing: -.7px; }
.tabs span { position: relative; height: 25px; padding: 0 25px 0 26px; border-right: 1px solid #c6c6cd; line-height: 25px; }
.tabs span:first-child { padding-right: 24.500px; letter-spacing: -.82px; }
.tabs span:nth-child(4) { letter-spacing: -.63px; }
.tabs span:last-child { border-right: 0; letter-spacing: -.6px; }
.tabs .on { color: #006ce0; }
.tabs .on::after { content: ""; position: absolute; left: 1px; right: 0; bottom: -11px; height: 5px; border-radius: 3px; background: #006ce0; }

.explicit { height: 216px; margin-top: 15px; padding-top: 15px; }
.without { height: 240px; margin-top: 15px; padding-top: 16px; }
.ch2 { display: flex; align-items: center; justify-content: space-between; height: 34px; margin-bottom: 6px; line-height: 30px; }
.ch2 h2 { margin-top: -1px; }
.ch2 i { margin-left: 1px; color: #656871; font-style: normal; font-weight: 400; letter-spacing: -.3px; }
.without p { height: 24px; margin: -4px 0 7px; color: #424650; line-height: 24px; letter-spacing: -.215px; }
.finder { display: flex; align-items: center; justify-content: space-between; height: 35px; }
.find { display: flex; align-items: center; width: 810px; height: 35px; padding-left: 14px; border: 2px solid #8c8c94; border-radius: 10px; color: #656871; }
.find svg { width: 19px; height: 19px; }
.find em { margin-left: 12px; padding-bottom: 2px; letter-spacing: -.36px; }
.pager { display: flex; align-items: center; }
.ar { width: 10px; height: 17px; color: #b4b4bb; }
.pager b { width: 60px; padding-bottom: 1px; text-align: center; }
.psep { width: 1px; height: 34px; margin: 0 17px; background: #c6c6cd; }
.gr { width: 20px; height: 20px; margin-right: 7px; color: #424650; }
.tr { display: grid; grid-template-columns: 360px 360px 359px 360px; height: 39px; align-items: center; padding-bottom: 2px; border-bottom: 1px solid #ebebf0; }
.tr:last-child { height: 37px; border-bottom: 0; }
.tr span { padding-left: 20px; }
.tr span:first-child { padding-left: 2.500px; }
.ip { letter-spacing: .2px; }
.table .th { height: 36px; margin-top: 5px; padding-bottom: 2px; border-bottom: 1px solid #b4b4bb; color: #424650; font-weight: 700; letter-spacing: -.42px; }
.th span { display: flex; align-items: center; justify-content: space-between; height: 22px; padding-right: 16px; border-right: 2px solid #8c8c94; }
.th span:last-child { padding-right: 10px; border-right: 0; }
.th svg { width: 13px; height: 12px; }
.tr a { display: block; width: max-content; height: 22px; margin-top: 1px; line-height: 21px; border-bottom: 1px solid #006ce0; color: #006ce0; letter-spacing: .03px; }
.cut .th { margin-top: 5px; }
.main-sb { width: 18px; padding-top: 6px; }
.main-sb .thumb { width: 11px; height: 543px; margin-top: 7px; }
.main-sb .down { margin-top: 149px; }

footer { display: flex; align-items: center; height: 38px; padding-left: 20px; border-top: 1px solid #424650; background: #161d26; color: #f2f2f5; font-size: 15px; font-weight: 500; }
footer svg { width: 20px; height: 20px; }
.f1 { margin-left: 6.500px; letter-spacing: -.1px; }
.f2 { margin-left: 31px; letter-spacing: -.25px; }
.copy { margin-left: auto; color: #c6c6cd; font-weight: 400; letter-spacing: -.13px; }
.f3 { margin-left: 38px; letter-spacing: -.3px; }
.f4 { margin-left: 31px; letter-spacing: -.3px; }
.f5 { margin: 0 20px 0 31px; letter-spacing: -.34px; }

/* desktop taskbar */
.taskbar { position: relative; display: flex; align-items: center; height: 58px; border-top: 1px solid #b9c4c2; font-size: 15px; background: linear-gradient(90deg, #e3e4e6 0, #dfe4e5 170px, #ecdfd1 280px, #f1ddd3 360px, #e9e0d6 480px, #e2e2d8 590px, #cff1dc 670px, #d0f2f0 740px, #dceaf6 800px, #d0eff0 900px, #caf2ee 1050px, #cff5f0 1180px, #c8f0ea 1300px, #c9f1e6 1400px, #c5efec 1480px, #c8ece2 1620px, #c8edea 1760px, #d3dfe2 1830px, #d6dbe1 1918px); }
.weather { position: relative; display: flex; align-items: center; width: 585px; padding-left: 25px; line-height: 21px; }
.weather > div { margin: 0 0 0 5px; }
.badge { position: absolute; left: 38px; top: -1px; width: 20px; height: 20px; border-radius: 50%; background: #c42b1c; color: #fff; font-weight: 500; line-height: 20px; text-align: center; }
.temp { color: #222; letter-spacing: -.9px; }
.city { color: #5b5b5b; letter-spacing: -.5px; }
.start { width: 29px; height: 29px; margin-top: 2px; }
.wsearch { display: flex; align-items: center; gap: 12px; width: 273px; height: 39px; margin: 2px 0 0 18px; padding-left: 12px; border: 1px solid #b9d9dc; border-radius: 20px; background: rgba(255,255,255,.75); color: #4d5557; font-size: 17px; letter-spacing: -.5px; }
.wsearch svg { width: 19px; height: 19px; color: #1d1d1d; }
.apps-row { display: flex; margin-left: 2.500px; }
.apps-row > span { position: relative; display: flex; align-items: center; justify-content: center; width: 55.100px; height: 48px; }
.apps-row > span > svg { width: 30px; height: 30px; }
.dot::after { content: ""; position: absolute; left: 24px; bottom: 0; width: 8px; height: 4px; border-radius: 2px; background: #738582; }
.cur::before { content: ""; position: absolute; left: 3px; top: 0; width: 48px; height: 48px; border: 1px solid #d5ecea; border-radius: 5px; background: rgba(255,255,255,.6); }
.cur::after { content: ""; position: absolute; left: 17px; bottom: 0; width: 20px; height: 4px; border-radius: 2px; background: #0078d4; }
.cur svg { position: relative; }
.teams i { position: absolute; left: 28px; top: 3px; width: 20px; height: 20px; border-radius: 50%; background: #13a10e; }
.tray { display: flex; align-items: center; margin: 0 23px 0 auto; color: #1a1a1a; }
.t1 { width: 14px; height: 9px; margin-right: 23px; }
.t2 { width: 21px; height: 18px; margin-right: 22px; }
.lang { margin-right: 24px; letter-spacing: -.45px; color: #333; }
.t3 { width: 19px; height: 16px; margin-right: 10px; }
.t4 { width: 20px; height: 16px; margin-right: 10px; }
.t5 { width: 21px; height: 18px; margin-right: 21px; }
.clock { line-height: 21px; text-align: right; letter-spacing: -.3px; }
```
